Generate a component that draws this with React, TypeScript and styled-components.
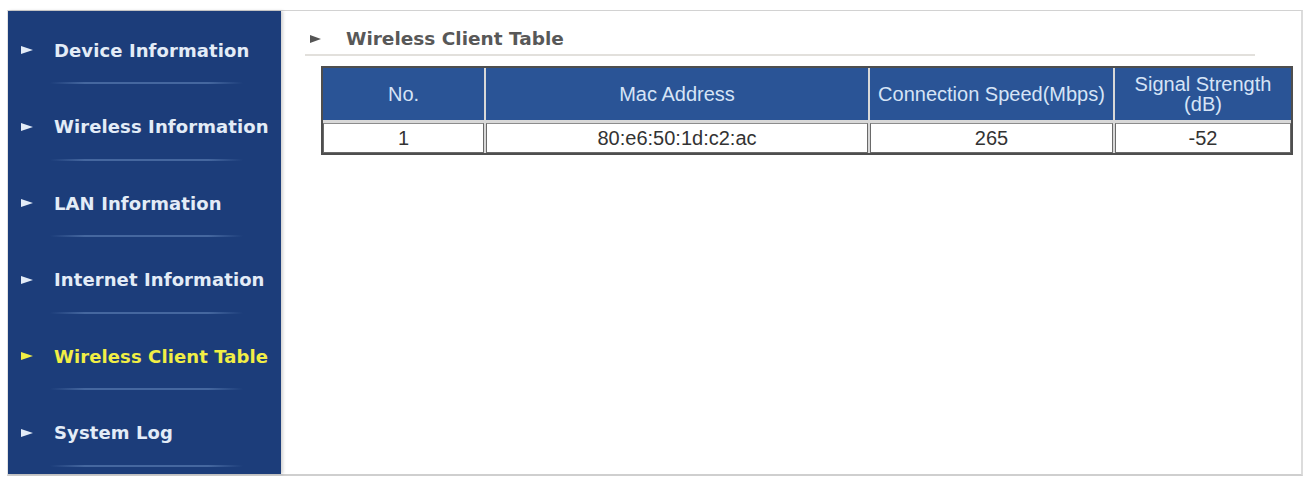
import React from "react";
import styled, { createGlobalStyle } from "styled-components";

const GlobalStyle = createGlobalStyle`
  html, body {
    margin: 0;
    padding: 0;
    background: #ffffff;
  }
  body {
    font-family: "Liberation Sans", Arial, sans-serif;
  }
`;

const Frame = styled.div`
  display: flex;
  box-sizing: border-box;
  width: 1296px;
  height: 466px;
  margin: 10px 0 0 7px;
  border-top: 1px solid #d2d2d2;
  border-right: 2px solid #dcdcdc;
  border-bottom: 2px solid #cfcfcf;
  border-left: 1px solid #e4e4e4;
`;

const Sidebar = styled.nav`
  flex: 0 0 273px;
  background: #1c3d7a;
  box-shadow: 2px 0 3px rgba(0, 0, 0, 0.18);
  display: flex;
  flex-direction: column;
`;

const NavItem = styled.div`
  height: 76.5px;
  display: flex;
  flex-direction: column;
`;

const NavLabel = styled.div<{ $active?: boolean }>`
  margin-top: 7px;
  height: 64px;
  display: flex;
  align-items: center;
  padding-left: 13px;
  font-family: "DejaVu Sans", Verdana, sans-serif;
  font-weight: bold;
  font-size: 18px;
  letter-spacing: 0.1px;
  white-space: nowrap;
  color: ${(p) => (p.$active ? "#f1ee45" : "#e3ecf7")};
`;

const NavArrow = styled.span<{ $active?: boolean }>`
  display: inline-block;
  width: 0;
  height: 0;
  border-top: 4px solid transparent;
  border-bottom: 4px solid transparent;
  border-left: 12px solid ${(p) => (p.$active ? "#f1ee45" : "#e3ecf7")};
  margin-right: 21px;
`;

const NavRule = styled.div`
  height: 2px;
  margin: 0 38px 0 42px;
  background: linear-gradient(
    to right,
    rgba(80, 112, 170, 0) 0%,
    #45679f 18%,
    #45679f 82%,
    rgba(80, 112, 170, 0) 100%
  );
`;

const Content = styled.main`
  flex: 1;
  padding: 12px 8px 0 24px;
  display: flex;
  flex-direction: column;
`;

const Heading = styled.div`
  height: 31px;
  margin-right: 38px;
  display: flex;
  align-items: center;
  border-bottom: 2px solid #e2e0dc;
  font-family: "DejaVu Sans", Verdana, sans-serif;
  font-weight: bold;
  font-size: 18.5px;
  color: #585858;
  white-space: nowrap;
`;

const HeadingArrow = styled.span`
  display: inline-block;
  width: 0;
  height: 0;
  margin-left: 5px;
  margin-right: 25px;
  border-top: 4px solid transparent;
  border-bottom: 4px solid transparent;
  border-left: 11px solid #555555;
`;

const Table = styled.table`
  margin: 10px 0 0 16px;
  width: 972px;
  table-layout: fixed;
  border-collapse: separate;
  border-spacing: 0;
  border: 2px solid #4e4e4e;
  background: #d8d8d8;
  font-family: "Liberation Sans", Arial, sans-serif;
  font-size: 20px;
`;

const HeadCell = styled.th<{ $first?: boolean }>`
  height: 52px;
  padding: 0;
  background: #2a5496;
  color: #d6e4f6;
  font-weight: normal;
  line-height: 20px;
  text-align: center;
  border-left: ${(p) => (p.$first ? "0" : "2px solid #d8d8d8")};
`;

const BodyCell = styled.td<{ $first?: boolean }>`
  padding: 3px 0 0 ${(p) => (p.$first ? "0" : "2px")};
`;

const CellBox = styled.div`
  box-sizing: border-box;
  height: 30px;
  display: flex;
  align-items: center;
  justify-content: center;
  background: #ffffff;
  border: 1px solid #6a6a6a;
  border-top-color: #8c8c8c;
  color: #333333;
`;

const navItems = [
  "Device Information",
  "Wireless Information",
  "LAN Information",
  "Internet Information",
  "Wireless Client Table",
  "System Log",
];

const columns: { label: React.ReactNode; width: number }[] = [
  { label: "No.", width: 161 },
  { label: "Mac Address", width: 384 },
  { label: "Connection Speed(Mbps)", width: 245 },
  {
    label: (
      <>
        Signal Strength
        <br />
        (dB)
      </>
    ),
    width: 178,
  },
];

const clients = [{ no: 1, mac: "80:e6:50:1d:c2:ac", speed: 265, signal: -52 }];

export default function App() {
  const active = "Wireless Client Table";
  return (
    <>
      <GlobalStyle />
      <Frame>
        <Sidebar>
          {navItems.map((item) => (
            <NavItem key={item}>
              <NavLabel $active={item === active}>
                <NavArrow $active={item === active} />
                {item}
              </NavLabel>
              <NavRule />
            </NavItem>
          ))}
        </Sidebar>
        <Content>
          <Heading>
            <HeadingArrow />
            Wireless Client Table
          </Heading>
          <Table>
            <colgroup>
              {columns.map((c, i) => (
                <col key={i} style={{ width: c.width }} />
              ))}
            </colgroup>
            <thead>
              <tr>
                {columns.map((c, i) => (
                  <HeadCell key={i} $first={i === 0}>
                    {c.label}
                  </HeadCell>
                ))}
              </tr>
            </thead>
            <tbody>
              {clients.map((c) => (
                <tr key={c.no}>
                  {[c.no, c.mac, c.speed, c.signal].map((v, i) => (
                    <BodyCell key={i} $first={i === 0}>
                      <CellBox>{v}</CellBox>
                    </BodyCell>
                  ))}
                </tr>
              ))}
            </tbody>
          </Table>
        </Content>
      </Frame>
    </>
  );
}
